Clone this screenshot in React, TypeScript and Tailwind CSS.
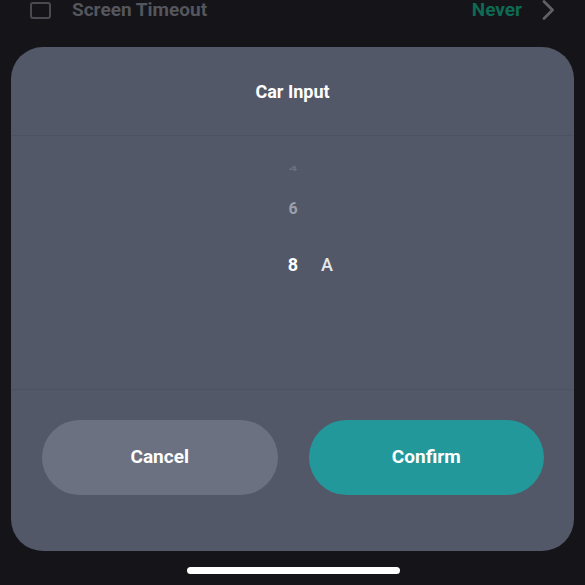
import React from "react";

export default function App() {
  return (
    <div
      className="w-[585px] h-[585px] bg-[#141419] overflow-hidden flex flex-col"
      style={{ fontFamily: "Roboto, 'Noto Sans', sans-serif" }}
    >
      {/* Top settings row (partially cut) */}
      <div className="h-[18px] flex items-center pl-[30px] pr-[29px] mt-[1px]">
        <div className="w-[21px] h-[17px] border-2 border-[#4a4b52] rounded-[3px]" />
        <div className="ml-[21px] text-[19px] font-bold text-[#55565d] leading-[18px]">Screen Timeout</div>
        <div className="ml-auto text-[19px] font-bold text-[#0f6a53] leading-[18px]">Never</div>
        <svg className="ml-[18px]" width="16" height="22" viewBox="0 0 16 22">
          <path d="M4 2.5 L12.5 11 L4 19.5" fill="none" stroke="#606167" strokeWidth="2.8" strokeLinecap="round" strokeLinejoin="round" />
        </svg>
      </div>

      {/* Dialog */}
      <div className="mt-[28px] mx-[11px] h-[504px] rounded-[32px] bg-[#525867] flex flex-col">
        <div className="h-[89px] flex items-center justify-center border-b border-[#4c5261]">
          <span className="text-[18px] font-bold text-white">Car Input</span>
        </div>
        <div className="h-[254px] border-b border-[#4c5261] relative">
          <div className="absolute left-[274px] top-[21px] w-[16px] text-center text-[15px] font-bold text-[#6a7080] scale-y-50">4</div>
          <div className="absolute left-[272px] top-[61px] w-[20px] text-center text-[16px] font-bold text-[#9ca0ab]">6</div>
          <div className="absolute left-[271px] top-[115px] w-[22px] text-center text-[18px] font-bold text-white">8</div>
          <div className="absolute left-[308px] top-[115px] w-[16px] text-center text-[18px] font-medium text-[#e6e7ea]">A</div>
        </div>
        <div className="flex gap-[31px] pl-[31px] pr-[30px] pt-[30px]">
          <button className="w-[236px] h-[75px] rounded-full bg-[#6b7180] text-white text-[19px] font-bold">Cancel</button>
          <button className="w-[236px] h-[75px] rounded-full bg-[#23989a] text-white text-[19px] font-bold">Confirm</button>
        </div>
      </div>

      {/* Home indicator */}
      <div className="mt-[16px] flex justify-center">
        <div className="ml-[1px] w-[213px] h-[7px] rounded-full bg-white" />
      </div>
    </div>
  );
}
